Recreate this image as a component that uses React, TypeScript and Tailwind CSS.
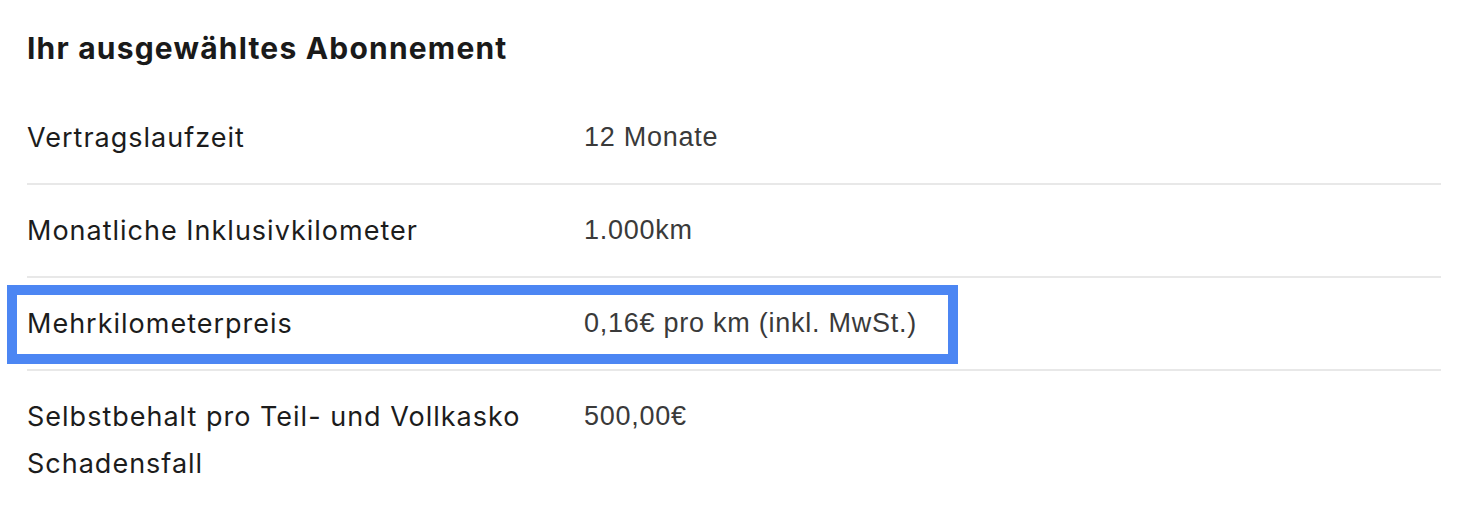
import React from "react";

const rows = [
  { label: "Vertragslaufzeit", value: "12 Monate" },
  { label: "Monatliche Inklusivkilometer", value: "1.000km" },
  { label: "Mehrkilometerpreis", value: "0,16€ pro km (inkl. MwSt.)", highlight: true },
  { label: "Selbstbehalt pro Teil- und Vollkasko Schadensfall", value: "500,00€" },
];

const App = () => {
  return (
    <div className="w-full min-h-[518px] bg-white pl-[27px] pr-[21px] pt-[26px]">
      <h2 className="font-['Inter',sans-serif] text-[30px] font-bold leading-[44px] tracking-[1.2px] text-[#1a1a1a]">
        Ihr ausgewähltes Abonnement
      </h2>
      <div className="mt-[22px]">
        {rows.map((row, i) => (
          <div
            key={row.label}
            className={`relative flex py-[22px] ${i < rows.length - 1 ? "border-b-2 border-[#e8e8e8]" : ""}`}
          >
            <div className="w-[557px] pr-6 font-['Inter',sans-serif] text-[27px] leading-[47px] tracking-[1px] text-[#1c1c1c]">
              {row.label}
            </div>
            <div className="pt-[1px] font-['Liberation_Sans',Arial,sans-serif] text-[27px] leading-[45px] tracking-[0.75px] text-[#3a3a3a]">
              {row.value}
            </div>
            {row.highlight && (
              <div className="pointer-events-none absolute -left-[20px] top-[7px] h-[79px] w-[951px] border-[10px] border-[#4c86f3]" />
            )}
          </div>
        ))}
      </div>
    </div>
  );
};

export default App;
